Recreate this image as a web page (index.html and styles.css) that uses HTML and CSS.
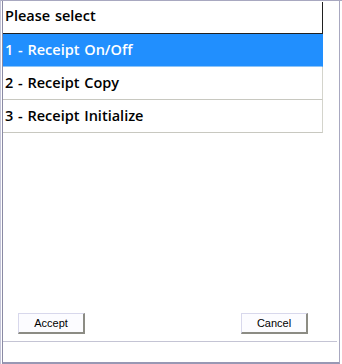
FILE: index.html
```html
<!DOCTYPE html>
<html>
<head>
<meta charset="utf-8">
<link rel="stylesheet" href="styles.css">
</head>
<body>
<div class="window">
  <div class="inner">
    <div class="list">
      <div class="header">Please select</div>
      <div class="row selected">1 - Receipt On/Off</div>
      <div class="row">2 - Receipt Copy</div>
      <div class="row">3 - Receipt Initialize</div>
    </div>
    <div class="buttons">
      <button class="btn">Accept</button>
      <button class="btn">Cancel</button>
    </div>
    <div class="status"></div>
  </div>
</div>
</body>
</html>
```
FILE: styles.css
```css
html, body {
  margin: 0;
  padding: 0;
  background: #ffffff;
}
.window {
  box-sizing: border-box;
  width: 342px;
  height: 364px;
  border-left: 1px solid #c4c4d8;
  border-top: 1px solid #a8a8c0;
  padding-right: 2px;
  display: flex;
}
.inner {
  flex: 1;
  display: flex;
  flex-direction: column;
  margin-left: 1px;
  border-left: 1px solid #8a8aa4;
  border-right: 1px solid #a8a8c0;
  border-bottom: 2px solid #9898b4;
  padding-top: 1px;
}
.list {
  width: 320px;
  font-family: "Open Sans", "DejaVu Sans", sans-serif;
  font-weight: 600;
  font-size: 14.5px;
  word-spacing: 1px;
  color: #000;
}
.header {
  box-sizing: border-box;
  height: 32px;
  line-height: 28px;
  padding-left: 2px;
  border-right: 1px solid #202020;
  border-bottom: 1px solid #202020;
  background: #fff;
}
.row {
  box-sizing: border-box;
  height: 33px;
  line-height: 31px;
  padding-left: 2px;
  border-right: 1px solid #d4d4cc;
  border-bottom: 1px solid #c8c8c0;
  background: #fff;
}
.row.selected {
  background: #218ffe;
  color: #fff;
  border-bottom-color: #8cc4f8;
  border-right-color: #218ffe;
}
.buttons {
  margin-top: auto;
  display: flex;
  justify-content: space-between;
  padding: 0 31px 0 15px;
  margin-bottom: 7px;
}
.btn {
  box-sizing: border-box;
  width: 67px;
  height: 21px;
  padding: 0;
  background: #fcfcff;
  border-top: 1px solid #d8d8ec;
  border-left: 1px solid #d8d8ec;
  border-right: 2px solid #8c8c84;
  border-bottom: 2px solid #8c8c84;
  font-family: "Liberation Sans", Arial, sans-serif;
  font-size: 11px;
  color: #000;
}
.status {
  height: 20px;
  margin-right: 2px;
  border-top: 1px solid #c4c4d4;
}
```
